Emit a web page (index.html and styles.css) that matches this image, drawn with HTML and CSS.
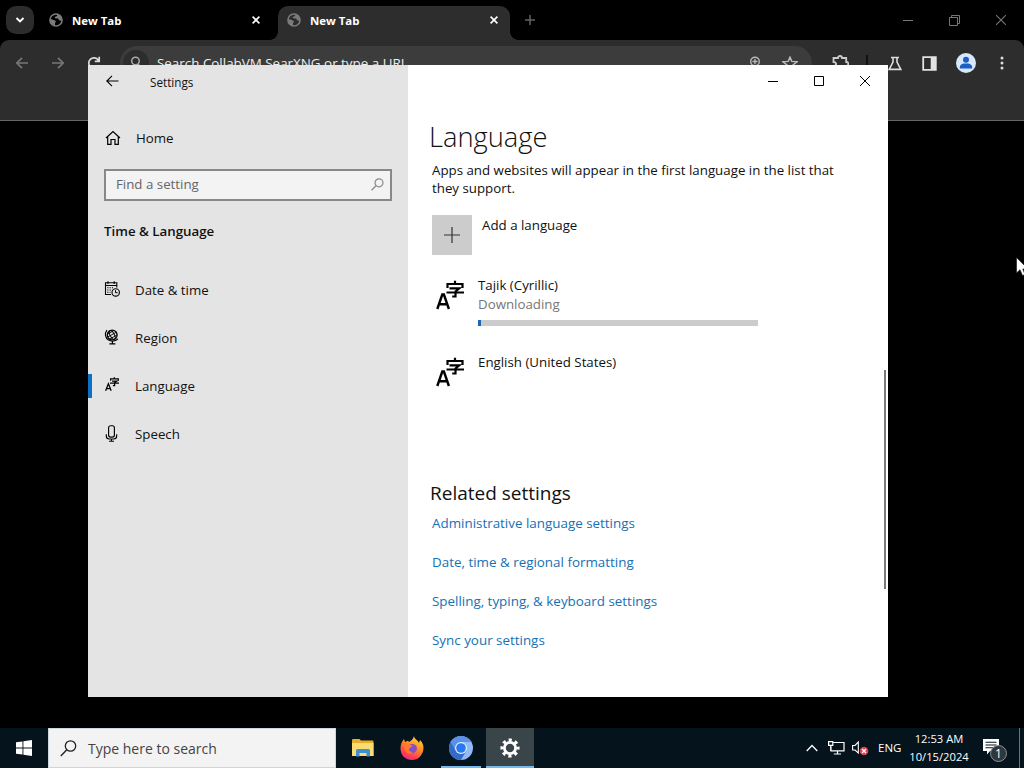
FILE: index.html
```html
<!DOCTYPE html>
<html lang="en">
<head>
<meta charset="utf-8">
<title>Settings - Language</title>
<link rel="stylesheet" href="styles.css">
</head>
<body>
<svg class="defs" width="0" height="0" aria-hidden="true">
  <symbol id="globe" viewBox="0 0 14 14">
    <circle cx="7" cy="7" r="6.1" fill="none" stroke="#7b7b7b" stroke-width="1.5"/>
    <path d="M1 6 C3 6 4 7 5.5 7.2 L7 8.6 L6 10 L6 12.7 C3 12.5 1 10 1 7Z M5 1.5 L8.5 1 L8 3 L5.7 4 L6 5.3 L9 5.5 L10.5 7.5 L12.7 8 L13 6 C12 3 10 1 7 .8Z" fill="#7b7b7b"/>
  </symbol>
  <symbol id="lang" viewBox="0 0 28 30">
    <g fill="none" stroke="#000" stroke-width="2.4">
      <path d="M1.3 29 L6.3 14.5 H7.9 L12.9 29 M3.3 24.2 H11"/>
      <path d="M19 .8 V4 M11.5 8 V4 H26.5 V8 M13.5 8.3 H23.3 L19.5 11.5 V16.5 H16.2 M10.5 12.5 H28" stroke-width="2.2"/>
    </g>
  </symbol>
  <symbol id="lang-small" viewBox="0 0 14 14">
    <g fill="none" stroke="#000" stroke-width="1.25">
      <path d="M.6 13.8 L3.4 6.8 L6.2 13.8 M1.6 11.5 H5.2"/>
      <path d="M9.3 .2 V2 M5.6 3.8 V1.9 H13.3 V3.8 M7 4 H12 L9.6 5.6 V8.5 H7.9 M5 6.2 H14"/>
    </g>
  </symbol>
</svg>

<div class="desktop">
  <header class="browser">
    <div class="tabstrip">
      <div class="tab-search"><svg width="10" height="10" viewBox="0 0 10 10"><path d="M1.5 3 L5 6.5 L8.5 3" fill="none" stroke="#fff" stroke-width="1.9"/></svg></div>
      <div class="tab">
        <svg width="14" height="14"><use href="#globe"/></svg><span class="tab-title">New Tab</span>
        <svg class="tab-close" width="8" height="8" viewBox="0 0 8 8"><path d="M.6 .6 L7.4 7.4 M7.4 .6 L.6 7.4" stroke="#fff" stroke-width="1.6"/></svg>
      </div>
      <div class="tab active">
        <svg width="14" height="14"><use href="#globe"/></svg><span class="tab-title">New Tab</span>
        <svg class="tab-close" width="8" height="8" viewBox="0 0 8 8"><path d="M.6 .6 L7.4 7.4 M7.4 .6 L.6 7.4" stroke="#fff" stroke-width="1.6"/></svg>
      </div>
      <svg class="new-tab" width="10" height="10" viewBox="0 0 10 10"><path d="M5 0 V10 M0 5 H10" stroke="#626262" stroke-width="1.5"/></svg>
      <div class="browser-controls">
        <svg width="10" height="10" viewBox="0 0 10 10"><path d="M0 5.5 H10" stroke="#777"/></svg>
        <svg width="11" height="11" viewBox="0 0 11 11"><path d="M.5 2.5 H8.5 V10.5 H.5Z M2.5 2.5 V.5 H10.5 V8.5 H8.5" fill="none" stroke="#777"/></svg>
        <svg width="10" height="10" viewBox="0 0 10 10"><path d="M0 0 L10 10 M10 0 L0 10" stroke="#777" stroke-width="1.1"/></svg>
      </div>
    </div>
    <div class="toolbar">
      <div class="nav">
        <svg width="14" height="14" viewBox="0 0 14 14"><path d="M13 7 H2 M7 1.8 L1.8 7 L7 12.2" fill="none" stroke="#777" stroke-width="1.7"/></svg>
        <svg width="14" height="14" viewBox="0 0 14 14"><path d="M1 7 H12 M7 1.8 L12.2 7 L7 12.2" fill="none" stroke="#777" stroke-width="1.7"/></svg>
        <svg width="14" height="14" viewBox="0 0 14 14"><path d="M11.8 9 A5.2 5.2 0 1 1 11.3 4.2 M12.2 .8 V5.3 H7.8" fill="none" stroke="#ddd" stroke-width="1.7"/></svg>
      </div>
      <div class="omnibox">
        <span class="omni-icon"><svg width="12" height="14" viewBox="0 0 12 14"><circle cx="5.5" cy="5" r="3.8" fill="none" stroke="#aaa" stroke-width="1.5"/><path d="M8 8 L12 13" stroke="#aaa" stroke-width="1.5"/></svg></span>
        <span class="omni-text">Search CollabVM SearXNG or type a URL</span>
        <svg width="12" height="14" viewBox="0 0 12 14"><circle cx="6" cy="5.5" r="4.3" fill="none" stroke="#bbb" stroke-width="1.4"/><path d="M6 3 V8 M3.5 5.5 H8.5" stroke="#bbb" stroke-width="1.3"/></svg>
        <svg width="16" height="15" viewBox="0 0 16 15"><path d="M8 1.2 L9.8 5.4 L15 5.8 L11 9 L12.3 14 L8 11.3 L3.7 14 L5 9 L1 5.8 L6.2 5.4Z" fill="none" stroke="#bbb" stroke-width="1.5"/></svg>
      </div>
      <div class="actions">
        <svg width="17" height="17" viewBox="0 0 17 17"><path d="M1.5 3 H6 C6 .3 10 .3 10 3 H14.2 V7 C17.2 7 17.2 11 14.2 11 V15 H1.5 V11 C5 11 5 7 1.5 7Z" fill="none" stroke="#ccc" stroke-width="1.8"/></svg>
        <span class="sep"></span>
        <svg class="flask" width="14" height="15" viewBox="0 0 14 15"><path d="M3 1.5 H11 M5 1.5 V6 L1.2 13.4 H12.8 L9 6 V1.5" fill="none" stroke="#ddd" stroke-width="1.6"/></svg>
        <svg class="panel" width="15" height="15" viewBox="0 0 15 15"><path d="M1.2 1.2 H13.8 V13.8 H1.2Z" fill="none" stroke="#e2e2e2" stroke-width="1.8"/><path d="M8.7 1 H14 V14 H8.7Z" fill="#e2e2e2"/></svg>
        <svg class="avatar" width="20" height="20" viewBox="0 0 20 20"><circle cx="10" cy="10" r="10" fill="#d8e7fc"/><circle cx="10" cy="6.7" r="3" fill="#1c5fc4"/><path d="M3.8 14.8 C3.8 11 7 10.6 10 10.6 S16.2 11 16.2 14.8 V15.5 H3.8Z" fill="#1c5fc4"/></svg>
        <svg class="more" width="4" height="14" viewBox="0 0 4 14"><g fill="#ddd"><circle cx="2" cy="2" r="1.5"/><circle cx="2" cy="7" r="1.5"/><circle cx="2" cy="12" r="1.5"/></g></svg>
      </div>
    </div>
  </header>

  <main class="window">
    <aside class="sidebar">
      <div class="titlebar">
        <svg width="13" height="12" viewBox="0 0 13 12"><path d="M12.5 6 H1 M6 .8 L.8 6 L6 11.2" fill="none" stroke="#000" stroke-width="1.1"/></svg>
        <span>Settings</span>
      </div>
      <div class="home"><svg width="16" height="16" viewBox="0 0 16 16"><path d="M1 8 L8 1.5 L15 8 M2.7 6.5 V14.4 H6 V9.5 H10 V14.4 H13.3 V6.5" fill="none" stroke="#000" stroke-width="1.2"/></svg><span>Home</span></div>
      <div class="find"><span>Find a setting</span><svg width="13" height="13" viewBox="0 0 13 13"><circle cx="8" cy="4.8" r="4" fill="none" stroke="#8a8a8a" stroke-width="1.2"/><path d="M5 7.8 L.5 12.3" stroke="#8a8a8a" stroke-width="1.3"/></svg></div>
      <h2>Time &amp; Language</h2>
      <nav class="menu">
        <a class="item"><svg width="16" height="16" viewBox="0 0 16 16"><path d="M7 13.5 H1.5 V1.7 H12.8 V6.5 M1.5 4.5 H12.8 M4 .2 V3 M10.2 .2 V3" fill="none" stroke="#000" stroke-width="1.1"/><path d="M3.3 6.8 H9 M3.3 9 H7 M3.3 11.2 H6.5" stroke="#000" stroke-width="1.1" stroke-dasharray="1.2 1.1"/><circle cx="11.7" cy="11.4" r="3.7" fill="none" stroke="#000" stroke-width="1.1"/><path d="M11.5 9.2 V11.7 H13.6" fill="none" stroke="#000"/></svg><span>Date &amp; time</span></a>
        <a class="item"><svg width="16" height="16" viewBox="0 0 16 16"><g fill="none" stroke="#000"><circle cx="8.2" cy="6" r="4.9" stroke-width="1.3"/><ellipse cx="8.2" cy="6" rx="2.1" ry="4.8" transform="rotate(-28 8.2 6)" stroke-width=".9"/><path d="M3.7 5 L9.9 1.5 M3.6 8 L12.4 3.2 M5.8 10 L12.9 6" stroke-width=".9"/><path d="M2.9 1 C.4 4.5 1.2 9 4.6 11.1 C7.9 13 11.9 12 13.9 9.8 M8.4 12.5 V14.6 M5.4 14.9 H11.4" stroke-width="1.2"/></g></svg><span>Region</span></a>
        <a class="item selected"><svg width="16" height="16"><use href="#lang-small" x="1" y="0" width="14" height="14"/></svg><span>Language</span></a>
        <a class="item"><svg width="16" height="17" viewBox="0 0 16 17"><g fill="none" stroke="#000" stroke-width="1.15"><rect x="4.6" y=".7" width="5.8" height="11.4" rx="2"/><path d="M2.3 9.3 V11 Q2.3 14 5.3 14 H9.7 Q12.7 14 12.7 11 V9.3 M7.5 14 V16 M5 16.2 H10"/></g></svg><span>Speech</span></a>
      </nav>
    </aside>
    <section class="content">
      <div class="controls">
        <svg width="10" height="10" viewBox="0 0 10 10"><path d="M0 5.5 H10" stroke="#000"/></svg>
        <svg width="10" height="10" viewBox="0 0 10 10"><path d="M.5 .5 H9.5 V9.5 H.5Z" fill="none" stroke="#000"/></svg>
        <svg width="10" height="10" viewBox="0 0 10 10"><path d="M0 0 L10 10 M10 0 L0 10" stroke="#000"/></svg>
      </div>
      <h1>Language</h1>
      <p class="intro"><span>Apps and websites will appear in the first language in the list that</span><br>they support.</p>
      <div class="add"><span class="add-icon"><svg width="16" height="16" viewBox="0 0 16 16"><path d="M8 0 V16 M0 8 H16" stroke="#333" stroke-width="1.2"/></svg></span><span class="add-label">Add a language</span></div>
      <div class="language tajik">
        <svg width="28" height="30"><use href="#lang"/></svg>
        <div><div class="name">Tajik (Cyrillic)</div><div class="status">Downloading</div><div class="progress"><div class="bar"></div></div></div>
      </div>
      <div class="language english">
        <svg width="28" height="30"><use href="#lang"/></svg>
        <div class="name">English (United States)</div>
      </div>
      <h3>Related settings</h3>
      <div class="links">
        <a>Administrative language settings</a>
        <a>Date, time &amp; regional formatting</a>
        <a>Spelling, typing, &amp; keyboard settings</a>
        <a>Sync your settings</a>
      </div>
      <div class="scrollbar"></div>
    </section>
  </main>

  <svg class="cursor" width="8" height="19" viewBox="0 0 8 19"><path d="M.5 .5 V16 L4 12.7 L6.5 18.5 L9 17.5 L6.8 12 H12Z" fill="#fff" stroke="#111" stroke-width=".6"/></svg>

  <footer class="taskbar">
    <div class="start"><svg width="16" height="16" viewBox="0 0 16 16"><path d="M0 2.3 L6.5 1.4 V7.5 H0Z M7.4 1.3 L16 0 V7.5 H7.4Z M0 8.4 H6.5 V14.6 L0 13.7Z M7.4 8.4 H16 V16 L7.4 14.7Z" fill="#fff"/></svg></div>
    <div class="search"><svg width="17" height="17" viewBox="0 0 17 17"><circle cx="10.5" cy="6" r="5.2" fill="none" stroke="#222" stroke-width="1.3"/><path d="M6.8 9.8 L.8 16" stroke="#222" stroke-width="1.4"/></svg><span>Type here to search</span></div>
    <div class="apps">
      <div class="app"><svg width="22" height="18" viewBox="0 0 22 18"><path d="M0 1.2 Q0 0 1.2 0 H7.5 L9 1.5 H20.5 Q21.5 1.5 21.5 2.5 V17 H0Z" fill="#e9ad2c"/><path d="M0 4 H21.5 V17 H0Z" fill="#fbdc70"/><path d="M4 17.5 V11.5 Q4 10 5.5 10 H16.5 Q18 10 18 11.5 V17.5 H14.5 V14 H7.5 V17.5Z" fill="#3e8ed0"/></svg></div>
      <div class="app"><svg width="24" height="24" viewBox="0 0 24 24"><defs><linearGradient id="fox" x1=".8" y1="0" x2=".3" y2="1"><stop offset="0" stop-color="#ffe03b"/><stop offset=".45" stop-color="#ff8a22"/><stop offset=".8" stop-color="#ff3f52"/><stop offset="1" stop-color="#e52b83"/></linearGradient></defs><path d="M14 0 C14 3 18 4 19 7 L20 4 C23 7 24 10 23.3 14 C22 20 18 24 12 24 C5 24 .5 19 .5 12.5 C.5 9 1.5 6 4 3 L5 6 L8 4.8 L9 6 C11 5 13.5 3 14 0Z" fill="url(#fox)"/><circle cx="12.3" cy="12.5" r="4.6" fill="#8050c7"/><path d="M3 8 C6 6 9 7 10 9 L13 9.8 L10 12 C8 13 9 16 12.5 16 C9 20 4.5 16 5 12Z" fill="#ff792a"/></svg></div>
      <div class="app running"><svg width="24" height="24" viewBox="0 0 24 24"><circle cx="12" cy="12" r="12" fill="#92baf4"/><path d="M12 12 L1.6 6 A12 12 0 0 0 12 24 L17.2 15Z" fill="#356bc8"/><path d="M12 12 V6 H22.4 A12 12 0 0 0 1.6 6 L6.8 15Z" fill="#5b91e8"/><circle cx="12" cy="12" r="6" fill="#e0edff"/><circle cx="12" cy="12" r="4.8" fill="#2878ef"/></svg></div>
      <div class="app running current"><svg width="20" height="20" viewBox="0 0 20 20"><circle cx="10" cy="10" r="5.6" fill="none" stroke="#fff" stroke-width="2.8"/><circle cx="10" cy="10" r="8" fill="none" stroke="#fff" stroke-width="3.2" stroke-dasharray="3.14 3.14" stroke-dashoffset="1.57"/></svg></div>
    </div>
    <div class="tray">
      <svg width="12" height="8" viewBox="0 0 12 8"><path d="M.7 7 L6 1.5 L11.3 7" fill="none" stroke="#fff" stroke-width="1.3"/></svg>
      <svg class="net" width="17" height="14" viewBox="0 0 17 14"><path d="M5.5 1.5 H16 V9.8 H3 V5.5 M.6 .6 H4.8 V4.3 H.6Z M2.7 4.3 V10 M9.5 10 V12.7 M5.8 13 H13" fill="none" stroke="#fff" stroke-width="1.2"/></svg>
      <svg class="vol" width="17" height="15" viewBox="0 0 17 15"><path d="M.6 4.5 H3 L6.3 1 V12 L3 9 H.6Z" fill="none" stroke="#fff" stroke-width="1.1"/><circle cx="12" cy="10" r="4.3" fill="#dd3f52"/><path d="M10 8 L14 12 M14 8 L10 12" stroke="#fff" stroke-width="1.4"/></svg>
      <span class="eng">ENG</span>
      <div class="clock"><span>12:53 AM</span><span>10/15/2024</span></div>
      <div class="notice"><svg width="16" height="16" viewBox="0 0 16 16"><path d="M0 0 H16 V12 H7 L4 15.5 V12 H0Z" fill="#fff"/><path d="M2.5 3.2 H13.5 M2.5 6 H13.5 M2.5 8.8 H10" stroke="#07151e" stroke-width="1.1"/></svg><span class="badge">1</span></div>
      <span class="peek"></span>
    </div>
  </footer>
</div>
</body>
</html>
```

FILE: styles.css
```css
* { box-sizing: border-box; }
body { margin: 0; background: #000; font: 13.3px/18px "Open Sans", "Noto Sans", sans-serif; color: #111; }
svg { display: block; flex: none; }
.defs { position: absolute; }
h1, h2, h3, p { margin: 0; }
span, a, .name, .status { white-space: nowrap; }
.desktop { position: relative; width: 1024px; height: 768px; overflow: hidden; display: flex; flex-direction: column; justify-content: space-between; background: #000; }

.browser { height: 121px; }
.tabstrip { height: 40px; display: flex; align-items: center; padding-left: 6px; }
.tab-search { width: 28px; height: 28px; border-radius: 10px; background: #2c2c2c; display: flex; align-items: center; justify-content: center; }
.tab { height: 34px; margin-top: 6px; padding: 0 6px 6px 15px; width: 232px; display: flex; align-items: center; color: #fff; font-size: 11.4px; font-weight: 700; }
.tab.active { position: relative; margin-left: 12px; padding-left: 9px; padding-right: 12px; background: #2d2d2d; border-radius: 10px 10px 0 0; }
/* Flared feet that join the active tab to the toolbar */
.tab.active::before, .tab.active::after { content: ""; position: absolute; bottom: 0; width: 8px; height: 8px; }
.tab.active::before { left: -8px; background: radial-gradient(circle at 0 0, #000 7.5px, #2d2d2d 8px); }
.tab.active::after { right: -8px; background: radial-gradient(circle at 100% 0, #000 7.5px, #2d2d2d 8px); }
.tab-title { margin-left: 9px; padding-top: 2px; }
.tab-close { margin-left: auto; }
.new-tab { margin-left: 15px; }
.browser-controls { margin-left: auto; display: flex; align-items: center; gap: 36px; padding-right: 18px; }
.toolbar { height: 81px; background: #2d2d2d; border-radius: 9px 9px 0 0; border-bottom: 1px solid #666; display: flex; align-items: flex-start; padding: 6px 20px 0 15px; }
.nav { display: flex; gap: 22px; padding-top: 10px; }
.omnibox { width: 692px; height: 34px; margin-left: 19px; border-radius: 17px; background: #3c3c3c; display: flex; align-items: center; padding-right: 14px; gap: 21px; }
.omni-icon { width: 26px; height: 26px; margin-left: 3px; border-radius: 13px; background: #2d2d2d; display: flex; align-items: center; justify-content: center; }
.omni-text { margin: 0 auto 0 -13px; color: #eee; font-size: 13.4px; }
.actions { flex: 1; display: flex; align-items: center; height: 34px; padding-left: 20px; }
.sep { width: 2px; height: 16px; margin-left: 17px; background: #111; }
.flask { margin-left: 20px; }
.panel { margin-left: 20px; }
.avatar { margin-left: 19px; }
.more { margin-left: auto; }

.window { position: absolute; left: 88px; top: 65px; width: 800px; height: 632px; display: flex; background: #fff; }
.sidebar { width: 320px; background: #e4e4e4; display: flex; flex-direction: column; }
.titlebar { height: 32px; padding-left: 18px; display: flex; align-items: center; gap: 31px; font-size: 11.7px; }
.titlebar span { padding-top: 2px; }
.home { height: 36px; margin-top: 23px; padding-left: 17px; display: flex; align-items: center; gap: 15px; }
.home svg { margin-top: -1px; }
.find { height: 32px; margin: 13px 16px 0; border: 2px solid #888; background: #f3f3f3; display: flex; align-items: center; justify-content: space-between; padding: 0 6px 2px 10px; color: #666; }
.sidebar h2 { margin: 21px 16px 0; font-size: 13.3px; line-height: 18px; font-weight: 600; }
.menu { margin-top: 26px; }
.item { height: 48px; padding-left: 16px; display: flex; align-items: center; gap: 15px; }
.item svg { margin-top: -2px; }
.item.selected { background: linear-gradient(#0c71c3, #0c71c3) left center / 4px 24px no-repeat; }

.content { position: relative; width: 480px; padding-left: 24px; }
.controls { height: 32px; display: flex; align-items: center; justify-content: flex-end; gap: 36px; padding-right: 18px; }
h1 { margin: 20px 0 0 -3px; font-size: 27.3px; line-height: 40px; font-weight: 300; }
.intro { margin-top: 4px; }
.add { display: flex; gap: 10px; margin-top: 18px; height: 40px; }
.add-icon { width: 40px; height: 40px; background: #ccc; display: flex; align-items: center; justify-content: center; }
.add-label { padding-top: 1px; }
.language { display: flex; gap: 14px; padding-left: 4px; }
.tajik { margin-top: 21px; height: 77px; }
.tajik svg, .english svg { margin-top: 4px; }
.status { color: #777; line-height: 20px; }
.progress { width: 280px; height: 6px; margin-top: 6px; background: #ccc; }
.bar { width: 3px; height: 6px; background: #1768b2; }
.english { height: 77px; }
h3 { margin: 50px 0 0 -2px; font-size: 19px; line-height: 26px; font-weight: 400; }
.links { display: flex; flex-direction: column; gap: 21px; margin-top: 8px; color: #1670b5; font-size: 13.4px; }
.scrollbar { position: absolute; right: 2px; top: 305px; width: 2px; height: 219px; background: #7a7a7a; }
.cursor { position: absolute; left: 1016px; top: 257px; }

.taskbar { height: 40px; background: #04131c; display: flex; color: #fff; }
.start { width: 48px; display: flex; align-items: center; justify-content: center; }
.search { width: 288px; background: #f3f3f3; border: 1px solid #ccd7dc; color: #444; display: flex; align-items: center; gap: 11px; padding-left: 11px; font-size: 14px; }
.search span { padding-top: 2px; }
.apps { display: flex; gap: 1px; padding-left: 3px; }
.app { width: 48px; display: flex; align-items: center; justify-content: center; }
.running { border-bottom: 2px solid #76b9ed; padding-top: 2px; margin: 0 4px; width: 40px; }
.running.current { width: 48px; margin: 0; background: #3a4549; }
.tray { margin-left: auto; display: flex; align-items: center; }
.net { margin-left: 10px; }
.vol { margin-left: 7px; }
.eng { margin-left: 9px; width: 24px; font-size: 11.5px; }
.clock { width: 64px; margin-left: 5px; display: flex; flex-direction: column; align-items: center; font-size: 11.2px; line-height: 18px; }
.notice { position: relative; width: 26px; height: 22px; margin-left: 12px; padding-top: 2px; }
.badge { position: absolute; left: 7px; top: 8px; width: 17px; height: 17px; border: 1px solid #899096; border-radius: 9px; background: #30373c; font-size: 12px; line-height: 15px; text-align: center; }
.peek { width: 1px; height: 40px; margin: 0 4px 0 10px; background: #68747a; }
```
